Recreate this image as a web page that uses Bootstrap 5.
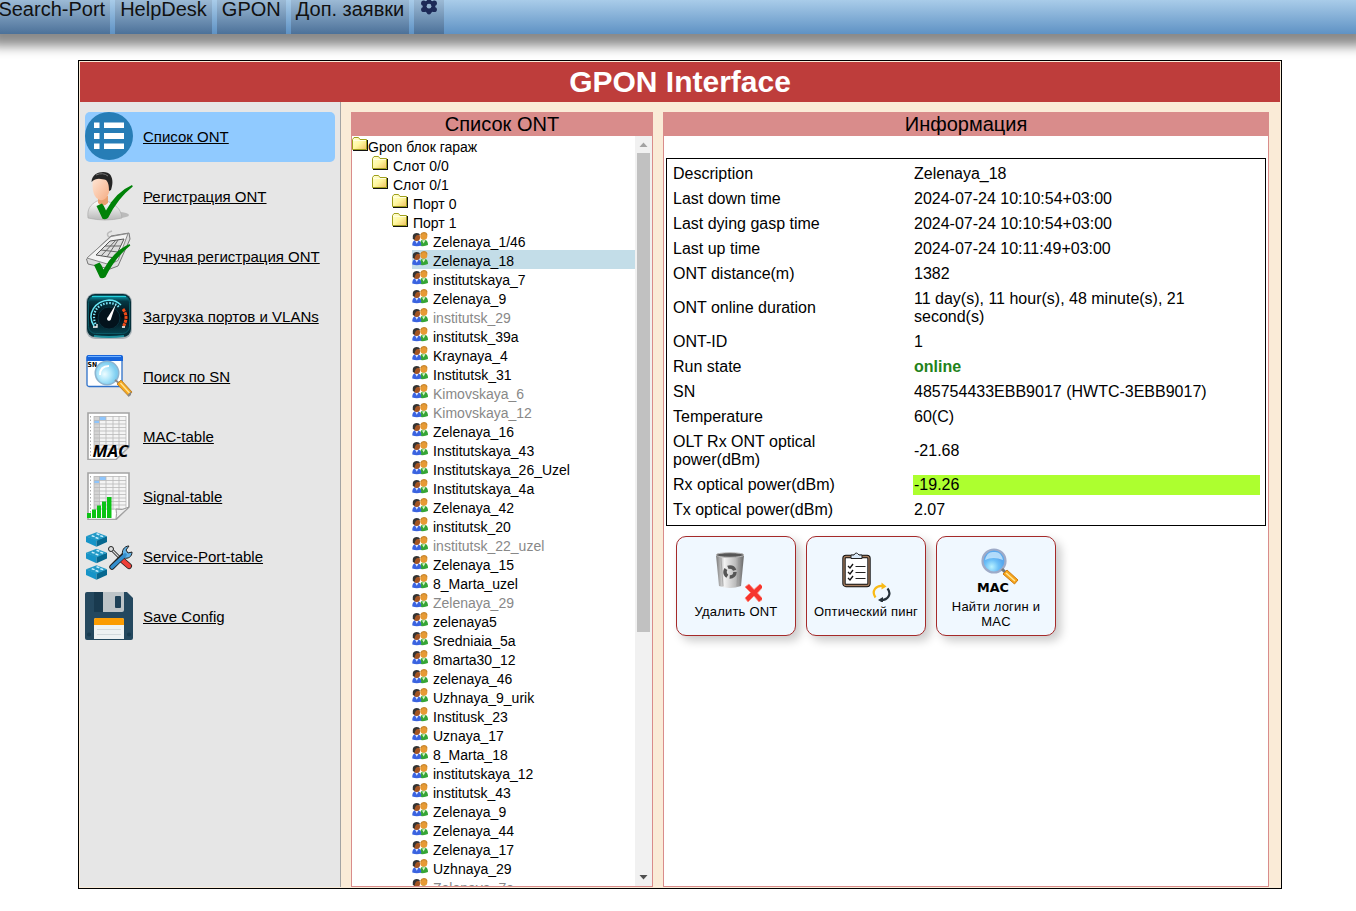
<!DOCTYPE html>
<html lang="ru">
<head>
<meta charset="utf-8">
<title>GPON Interface</title>
<link href="https://cdn.jsdelivr.net/npm/bootstrap@5.3.0/dist/css/bootstrap.min.css" rel="stylesheet">
<style>
body{font-family:"Liberation Sans",Arial,sans-serif;color:#000;background:#fff;height:911px;overflow:hidden;line-height:normal}
.topbar{height:34px;gap:5px;padding:0;background:linear-gradient(#a9cce9,#5f92c4);box-shadow:0 2px 11px 10px #8a8a8a}
.topbar a{height:34px;padding:0 5px;font-size:20px;line-height:18px;color:#111;background:linear-gradient(#9cbad5,#4c7199);white-space:nowrap;text-decoration:none}
.topbar a:first-child{margin-left:-6.6px}
.topbar .gear{width:30px}
.frame{width:1204px;height:829px;margin:26px 0 0 78px;border:1px solid #000;padding:1px;background:#faebd7;position:relative}
.title-bar{height:40px;background:#be3d3b;color:#fff;font-size:30px;line-height:39px;font-weight:bold}
.side{width:261px;background:#e6e6e6;border-right:1px solid #a3a3a3;padding:10px 5px;gap:10px}
.side a{height:50px;border-radius:5px;font-size:15px;color:#000;gap:10px}
.side a.active{background:#90caff}
.side svg{width:48px;height:48px;flex:none;overflow:visible}
.side span{margin-top:-1px}
.pane{border:1px solid #d98c8b;border-top:0;background:#fff}
.pane h2{margin:0 -1px;height:24px;font-size:20px;line-height:24px;font-weight:normal;background:#d98c8b}
.tree-pane{width:302px;margin:10px 10px 0 10px}
.info-pane{width:606px;margin-top:10px}
.tree{height:750px;overflow:hidden;font-size:14px}
.node{height:19px;gap:5px}
.node svg{width:16px;height:16px;flex:none;display:block}
.node .people{margin-top:1px}
.node span{line-height:19px;padding-top:2px;height:21px;white-space:nowrap}
.l0{gap:0}.l1{margin-left:20px}.l2{margin-left:40px}.l3{margin-left:60px}
.off{color:#888}
.picked{background:#c3dde8}
.scroller{width:17px;background:#f1f1f1}
.scroller div{width:13px;height:479px;background:#c1c1c1}
.scroller svg{width:17px;height:17px;display:block}
.facts{width:600px;margin:22px 0 0 2px;border:1px solid #000;border-collapse:separate;border-spacing:5px;font-size:16px;line-height:18px}
.facts td{padding:1px;vertical-align:middle}
.facts td:first-child{width:236px}
.on{color:#228218;font-weight:bold}
.good{background:#adff2f}
.tools{gap:10px;margin:10px 0 0 12px}
.tool{width:120px;height:100px;border:1px solid #a52a2a;border-radius:10px;background:#f0f8ff;box-shadow:5px 5px 10px #ccc;font-size:13px;line-height:15px;letter-spacing:.2px;color:#000;padding:0 4px 4px}
.tool:last-child{padding:1px 4px 0}
.tool svg{width:52px;height:52px;display:block;margin-bottom:2px;flex:none}
</style>
</head>
<body>
<svg class="position-absolute" width="0" height="0">
<defs>
<linearGradient id="steel" x2="1"><stop stop-color="#777"/><stop offset=".3" stop-color="#f2f2f2"/><stop offset=".7" stop-color="#bbb"/><stop offset="1" stop-color="#666"/></linearGradient>
<linearGradient id="skin" x2="1" y2="1"><stop stop-color="#ffe8d8"/><stop offset="1" stop-color="#f5aa80"/></linearGradient>
<linearGradient id="shirt" x2="0" y2="1"><stop stop-color="#fff"/><stop offset="1" stop-color="#b9b9b9"/></linearGradient>
<radialGradient id="lens" cx=".4" cy=".55"><stop stop-color="#eefcff"/><stop offset=".5" stop-color="#b5e9fb"/><stop offset="1" stop-color="#7dcdf0"/></radialGradient>
<radialGradient id="lens2" cx=".4" cy=".75"><stop stop-color="#b8f2ff"/><stop offset=".6" stop-color="#6cc0f8"/><stop offset="1" stop-color="#58a8ee"/></radialGradient>
<linearGradient id="dial" x2="0" y2="1"><stop stop-color="#0ba3b4"/><stop offset=".15" stop-color="#053844"/><stop offset=".55" stop-color="#020a10"/><stop offset="1" stop-color="#06404c"/></linearGradient>
<linearGradient id="fold" x2="1" y2="1"><stop stop-color="#ffffd8"/><stop offset=".5" stop-color="#fff8a0"/><stop offset="1" stop-color="#f0c060"/></linearGradient>
<symbol id="folder" viewBox="0 0 16 16"><path d="M1 14.500h14.500V4" fill="none" stroke="#111" stroke-width="1.200"/><path d="M.5 3.500 2 1.500h4.500L8 3.500h6.500v10H.5z" fill="url(#fold)" stroke="#a0a01c"/><path d="M1 4.500h13" stroke="#ffffe0"/></symbol>
<symbol id="people" viewBox="0 0 16 16"><path d="M8.500 14c-1-5 1-6.500 3-6.500s4.500 1 4.500 5.500q-3 1.500-7.500 1z" fill="#35a535"/><path d="M10 8.500l1.700 3L13.500 8z" fill="#d8f4c8"/><circle cx="11.800" cy="4.300" r="3.500" fill="#e79a34"/><path d="M8.800 3c1-3.200 5.500-3 6.200.3" fill="none" stroke="#c9872e" stroke-width="1.200"/><path d="M.3 13.500C.2 9.500 2 8 4.500 8S9.300 9.500 9.300 13.500q-4.500 1.500-9 0z" fill="#3a63e0"/><path d="M3 8.500l1.800 3.200L6.600 8.500z" fill="#e4ecff"/><circle cx="4.700" cy="5.500" r="3.400" fill="#a45422"/><path d="M.8 7V4C1 .5 7.500-.5 8.200 3.500 5 2.500 3.500 3 2.700 7.500z" fill="#333"/></symbol>
<symbol id="sheet" viewBox="0 0 48 48"><path d="M3 1h41v34L31 47.500H3z" fill="#fff" stroke="#a4a4a4" stroke-width="1.600"/><path d="M9 4h32v34H9z" fill="#f4f4f4"/><path d="M9 4h5v34H9z" fill="#d4d4d4"/><path d="M14 4h7v4h-7zM9 8h5v3H9z" fill="#8fc5fb"/><path d="M9 4v34M14.500 4v34M21 4v34M28 4v34M34 4v34M41 4v34M9 4.500h32M9 8.500h32M9 12h32M9 15.500h32M9 19h32M9 22.500h32M9 26h32M9 29.500h32M9 33h32M9 37h32" stroke="#b9b9b9" stroke-width=".8"/><path d="M5.500 4v40" stroke="#aaa" stroke-dasharray="1.500 2"/></symbol>
<symbol id="tick" viewBox="0 0 48 48"><path d="M11.500 34l5.500-2.500q2 2 4 7Q31 20 47 13l.8 1.500Q33 26 23 46q-3 2-5.500.8z" fill="#008208"/></symbol>
<symbol id="cube" viewBox="0 0 22 15"><path d="M0 4l11 4v7L0 10z" fill="#1694c8"/><path d="M22 4l-11 4v7l11-5z" fill="#07688f"/><path d="M0 4l11-4 11 4-11 5z" fill="#2299c6"/><path d="M6 3.500l3 1M11 1.500l3 1M10 5.500l3 1M15 3.500l3 1" stroke="#c6efff" stroke-width="1.600"/></symbol>
</defs>
</svg>

<nav class="topbar d-flex align-items-start">
<a href="#">Search-Port</a><a href="#">HelpDesk</a><a href="#">GPON</a><a href="#">Доп. заявки</a>
<a href="#" class="gear"><svg width="20" height="18" viewBox="0 0 20 18" class="d-block"><g fill="#1d2a57"><circle cx="10" cy="6.500" r="6.300"/><circle cx="10" cy="0" r="2.200"/><circle cx="10" cy="12.300" r="2.200"/><circle cx="4.700" cy="3.200" r="2.600"/><circle cx="15.300" cy="3.200" r="2.600"/><circle cx="4.700" cy="9.500" r="2.600"/><circle cx="15.300" cy="9.500" r="2.600"/></g><circle cx="10" cy="6.200" r="2.400" fill="#92b1cd"/></svg></a>
</nav>

<main class="frame d-flex flex-column">
<header class="title-bar text-center">GPON Interface</header>
<div class="d-flex flex-grow-1">
<nav class="side d-flex flex-column">
<a href="#" class="active d-flex"><svg viewBox="0 0 48 48"><circle cx="24" cy="24" r="24" fill="#277db6"/><path d="M9 10.500h5.500V16H9zM19 10.500h20V16H19zM9 21h5.500v6H9zM19 21h20v6H19zM9 31.500h5.500V37H9zM19 31.500h20V37H19z" fill="#fff"/></svg><span class="align-self-center">Список ONT</span></a>
<a href="#" class="d-flex"><svg viewBox="0 0 48 48"><ellipse cx="34" cy="43" rx="10" ry="3" fill="#bbb"/><path d="M3 46c-1-9 2-13 9-17h10c8 4 14 7 15 17q-17 4-34 0z" fill="url(#shirt)" stroke="#aaa" stroke-width=".7"/><path d="M13 24v7q5 5 10 0v-7z" fill="#eaa070"/><path d="M7.500 12C7 2 22 2 24 10c3 2 2 6 .5 8C23 26 19 29 15 28 9 26 7.500 19 7.500 12z" fill="url(#skin)"/><path d="M6.500 10C7-1 22-2 25.500 3c3 5 2 10 .5 15l-2 1c0-3 0-8-3-11C17 7 11 5 6.500 10z" fill="#252525"/><path d="M11 3q7-3 12 1" stroke="#777" fill="none"/><use href="#tick"/></svg><span class="align-self-center">Регистрация ONT</span></a>
<a href="#" class="d-flex"><svg viewBox="0 0 48 48"><path d="M27 6c-5-1-7-5 0-7" fill="none" stroke="#bbb" stroke-width="1.500"/><path d="M1.500 27L26 4l18-3 1 6-12 27-8 3L3 32z" fill="#ddd" stroke="#777"/><path d="M2 26L26 4.500l17-3-10 27-9 4z" fill="#f3f3f3" stroke="#888"/><path d="M11 23l14-14 14-2-9 19z" fill="#ddd" stroke="#555"/><path d="M16 18l17 2M20 14l16 0M16 24l15-16M22 25l11-17" stroke="#666"/><use href="#tick" x="-3" width="51" height="48" transform="translate(-1 -1)"/></svg><span class="align-self-center">Ручная регистрация ONT</span></a>
<a href="#" class="d-flex"><svg viewBox="0 0 48 48"><rect x="1" y="1" width="46" height="46" rx="9" fill="#a9b3b8"/><rect x="2" y="2" width="44" height="43" rx="8" fill="#05303a"/><rect x="3.500" y="3.500" width="41" height="38" rx="7" fill="url(#dial)" stroke="#0a5966"/><path d="M7 4.500h34" stroke="#22d0dc"/><circle cx="24" cy="26" r="11" fill="#03131c" stroke="#0a3340"/><path d="M9 34C1 22 10 9 24 8q7 0 12 5" fill="none" stroke="#66e6f5" stroke-width="1.500"/><path d="M10.500 32C6 21 12 12 24 11q6 0 10 4" fill="none" stroke="#7ce5f8" stroke-width="2.200" stroke-dasharray="1.500 1.500"/><path d="M38 17q6 8 0 18" fill="none" stroke="#f04b18" stroke-width="3" stroke-dasharray="3 .8"/><path d="M8 35h4v-3M40 35h-3" stroke="#fff" stroke-width="1.300" fill="none"/><path d="M31 12l-5 15a2 2 0 1 1-3-2z" fill="#fff"/><path d="M9 44q15 2 30 0" stroke="#1c8e9b" stroke-width="2" fill="none"/></svg><span class="align-self-center">Загрузка портов и VLANs</span></a>
<a href="#" class="d-flex"><svg viewBox="0 0 48 48"><rect x="2" y="4" width="35" height="30.500" rx="2" fill="#fff" stroke="#2f71ca" stroke-width="1.300"/><path d="M1.500 9V5q0-2 2-2H36q2 0 2 2v4z" fill="#1765db"/><path d="M3 4.500h33" stroke="#6fb0ff"/><text x="2.500" y="14.500" font-size="7" font-weight="bold" font-family="DejaVu Sans,sans-serif" textLength="9.500" lengthAdjust="spacingAndGlyphs">SN</text><circle cx="22" cy="21" r="11.700" fill="url(#lens)" stroke="#8db4cf" stroke-width="1.600"/><path d="M15 23q0-9 9-9" fill="none" stroke="#fff" stroke-width="2"/><path d="M30 28l4 3" stroke="#888" stroke-width="2"/><path d="M32 32l4-4L47 40l-3.500 4z" fill="#f6a81c" stroke="#b98235"/><path d="M35.500 31l9 10" stroke="#ffe49a" stroke-width="1.500"/><path d="M42.500 43L46 39.500V43L43.500 45z" fill="#888"/></svg><span class="align-self-center">Поиск по SN</span></a>
<a href="#" class="d-flex"><svg viewBox="0 0 48 48"><use href="#sheet"/><text x="7.500" y="45" font-size="16" font-weight="bold" font-style="italic" font-family="Open Sans,DejaVu Sans,sans-serif" textLength="36" lengthAdjust="spacingAndGlyphs">MAC</text></svg><span class="align-self-center">MAC-table</span></a>
<a href="#" class="d-flex"><svg viewBox="0 0 48 48"><use href="#sheet"/><path d="M31 47q1-6 0-10 6 2 13-2z" fill="#eee" stroke="#999"/><path d="M2 41h4v5H2zM7 37.500h4V46H7zM12 33.500h4V46h-4zM17 29.500h4V46h-4zM22 25h4.500v21H22z" fill="#0ac314"/></svg><span class="align-self-center">Signal-table</span></a>
<a href="#" class="d-flex"><svg viewBox="0 0 48 48"><use href="#cube" x="1" y="0" width="21" height="15"/><use href="#cube" x="1" y="16.500" width="21" height="15"/><use href="#cube" x="1" y="33" width="21" height="15"/><path d="M28 19l13 13" stroke="#222" stroke-width="3"/><path d="M28 19l13 13" stroke="#ddd" stroke-width="1.300"/><circle cx="26" cy="17" r="2.500" fill="#ddd" stroke="#222"/><path d="M37 28l7 6" stroke="#222" stroke-width="6" stroke-linecap="round"/><path d="M37 28l7 6" stroke="#ee4038" stroke-width="4.300" stroke-linecap="round"/><path d="M27 35l13-13" stroke="#222" stroke-width="5.500" stroke-linecap="round"/><path d="M38 24c-2-5 1-10 6-10l-3 4 2 3 4-1c0 5-4 7-8 6z" fill="#62b2e5" stroke="#222"/><path d="M27 35l13-12" stroke="#348fce" stroke-width="3.600" stroke-linecap="round"/></svg><span class="align-self-center">Service-Port-table</span></a>
<a href="#" class="d-flex"><svg viewBox="0 0 48 48"><path d="M0 2q0-2 2-2h40l6 6v40q0 2-2 2H2q-2 0-2-2z" fill="#24485f"/><path d="M9 0h10v20H9z" fill="#193a4f"/><path d="M18 0h21v18q0 2-2 2H18z" fill="#bdc4c8"/><rect x="30" y="4" width="6" height="12" rx="1" fill="#1d4057"/><path d="M9 28q0-2 2-2h26q2 0 2 2v19H9z" fill="#eef2f3"/><path d="M9 33v-5q0-2 2-2h26q2 0 2 2v5z" fill="#fb9c02"/><path d="M12 37.500h24M12 42.500h24" stroke="#d3dadd"/><circle cx="4" cy="42.500" r="2" fill="#173b50"/><circle cx="44" cy="42.500" r="2" fill="#173b50"/></svg><span class="align-self-center">Save Config</span></a>
</nav>

<section class="pane tree-pane">
<h2 class="text-center">Список ONT</h2>
<div class="tree d-flex">
<div id="tree" class="flex-grow-1"></div>
<div class="scroller d-flex flex-column align-items-center flex-shrink-0"><svg viewBox="0 0 17 17"><path d="M4.500 11h8l-4-4.500z" fill="#a3a3a3"/></svg><div></div><svg class="mt-auto" viewBox="0 0 17 17"><path d="M4.500 6h8l-4 4.500z" fill="#505050"/></svg></div>
</div>
</section>

<section class="pane info-pane">
<h2 class="text-center">Информация</h2>
<table class="facts">
<tr><td>Description</td><td>Zelenaya_18</td></tr>
<tr><td>Last down time</td><td>2024-07-24 10:10:54+03:00</td></tr>
<tr><td>Last dying gasp time</td><td>2024-07-24 10:10:54+03:00</td></tr>
<tr><td>Last up time</td><td>2024-07-24 10:11:49+03:00</td></tr>
<tr><td>ONT distance(m)</td><td>1382</td></tr>
<tr><td>ONT online duration</td><td>11 day(s), 11 hour(s), 48 minute(s), 21<br>second(s)</td></tr>
<tr><td>ONT-ID</td><td>1</td></tr>
<tr><td>Run state</td><td class="on">online</td></tr>
<tr><td>SN</td><td>485754433EBB9017 (HWTC-3EBB9017)</td></tr>
<tr><td>Temperature</td><td>60(C)</td></tr>
<tr><td>OLT Rx ONT optical<br>power(dBm)</td><td>-21.68</td></tr>
<tr><td>Rx optical power(dBm)</td><td class="good">-19.26</td></tr>
<tr><td>Tx optical power(dBm)</td><td>2.07</td></tr>
</table>
<div class="tools d-flex">
<button class="tool d-flex flex-column align-items-center justify-content-center"><svg viewBox="0 0 52 52"><path d="M6 5h28l-3 31q-11 4-22 0z" fill="url(#steel)"/><path d="M11 8l2 28M29 8l-2 28" stroke="#999" stroke-width=".7"/><ellipse cx="20" cy="5" rx="14" ry="2.300" fill="#555" stroke="#bbb"/><circle cx="20" cy="22" r="5" fill="none" stroke="#555" stroke-width="3.500" stroke-dasharray="8 2.400"/><path d="M35 37l4-3 5 5.500L50 34l3 3-5.500 6 5.500 6-4 3-5-6-6 6-3-4 5.500-5.500z" fill="#f6352e" stroke="#ff8e80" stroke-width=".8"/></svg><span>Удалить ONT</span></button>
<button class="tool d-flex flex-column align-items-center justify-content-center"><svg viewBox="0 0 52 52"><rect x="4" y="6.500" width="25" height="29" rx="2" fill="#fff" stroke="#111" stroke-width="3.400"/><rect x="4" y="6.500" width="25" height="29" rx="2" fill="none" stroke="#a77f60" stroke-width="1.300"/><path d="M11 8.500V5h3q2-4 5 0h3v3.500z" fill="#d9e9f8" stroke="#222"/><path d="M8 16l2 2 3-4M8 22l2 2 3-4M8 28l2 2 3-4" fill="none" stroke="#111" stroke-width="1.300"/><path d="M15.500 16.500h10M15.500 22.500h10M15.500 28.500h10" stroke="#222" stroke-width="1.200"/><path d="M35.500 47.500C31 41 36 35 43 36" fill="none" stroke="#f9ba16" stroke-width="2.200"/><path d="M41.500 32.500l5 4-5 3z" fill="#f9ba16"/><path d="M47.500 38.500C52 44 48 50 41 50" fill="none" stroke="#26313a" stroke-width="2.200"/><path d="M43 47l-5 3 5 3z" fill="#26313a"/></svg><span>Оптический пинг</span></button>
<button class="tool d-flex flex-column align-items-center justify-content-center"><svg viewBox="0 0 52 52"><circle cx="24" cy="16" r="11.500" fill="url(#lens2)" stroke="#9eabc8" stroke-width="2.200"/><path d="M15 15q2-9 9-8 7-1 9 8-10-4-18 0z" fill="#d8f1ff" opacity=".7"/><path d="M32 24l3 3" stroke="#777" stroke-width="3"/><path d="M33 29l4-4L48 35l-3.500 4z" fill="#f6a51c" stroke="#cf7c10"/><path d="M36 28l9 8" stroke="#ffe79a" stroke-width="1.500"/><text x="7" y="46.500" font-size="12.500" font-weight="bold" font-family="DejaVu Sans,sans-serif" textLength="32" lengthAdjust="spacingAndGlyphs" letter-spacing="0">MAC</text></svg><span>Найти логин и MAC</span></button>
</div>
</section>
</div>
</main>

<script src="https://cdn.jsdelivr.net/npm/bootstrap@5.3.0/dist/js/bootstrap.bundle.min.js"></script>
<script>
// level | label; "-" marks an offline ONT, "*" the selected one
const nodes = `0Gpon блок гараж
1Слот 0/0
1Слот 0/1
2Порт 0
2Порт 1
3Zelenaya_1/46
3*Zelenaya_18
3institutskaya_7
3Zelenaya_9
3-institutsk_29
3institutsk_39a
3Kraynaya_4
3Institutsk_31
3-Kimovskaya_6
3-Kimovskaya_12
3Zelenaya_16
3Institutskaya_43
3Institutskaya_26_Uzel
3Institutskaya_4a
3Zelenaya_42
3institutsk_20
3-institutsk_22_uzel
3Zelenaya_15
38_Marta_uzel
3-Zelenaya_29
3zelenaya5
3Sredniaia_5a
38marta30_12
3zelenaya_46
3Uzhnaya_9_urik
3Institusk_23
3Uznaya_17
38_Marta_18
3institutskaya_12
3institutsk_43
3Zelenaya_9
3Zelenaya_44
3Zelenaya_17
3Uzhnaya_29
3-Zelenaya_7a`.split('\n');
document.getElementById('tree').innerHTML = nodes.map(n => {
  const level = n[0], off = n[1] === '-', picked = n[1] === '*';
  const icon = level < 3 ? 'folder' : 'people';
  return `<div class="node d-flex l${level}${off ? ' off' : ''}${picked ? ' picked' : ''}"><svg class="${icon}"><use href="#${icon}"/></svg><span>${n.slice(off || picked ? 2 : 1)}</span></div>`;
}).join('');
</script>
</body>
</html>
